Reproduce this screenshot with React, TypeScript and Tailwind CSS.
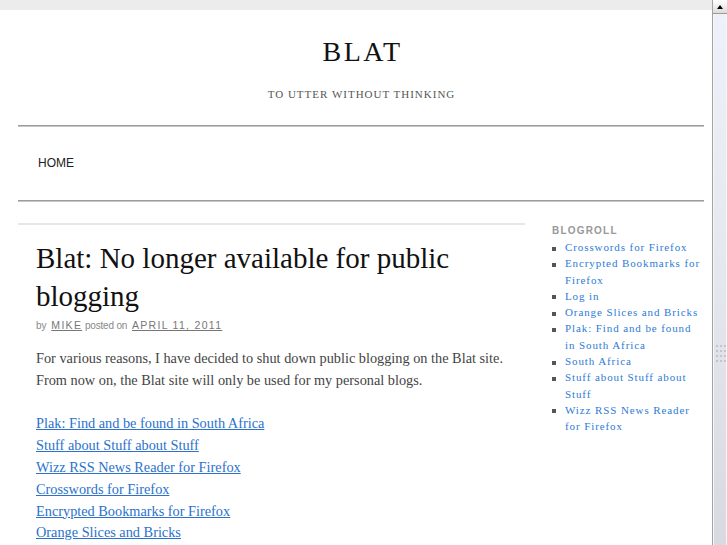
const serif = "font-['Liberation_Serif',serif]";
const sans = "font-['Liberation_Sans',Arial,sans-serif]";

const postLinks = [
  "Plak: Find and be found in South Africa",
  "Stuff about Stuff about Stuff",
  "Wizz RSS News Reader for Firefox",
  "Crosswords for Firefox",
  "Encrypted Bookmarks for Firefox",
  "Orange Slices and Bricks",
];

const blogroll = [
  "Crosswords for Firefox",
  "Encrypted Bookmarks for Firefox",
  "Log in",
  "Orange Slices and Bricks",
  "Plak: Find and be found in South Africa",
  "South Africa",
  "Stuff about Stuff about Stuff",
  "Wizz RSS News Reader for Firefox",
];

function Rule() {
  return <div className="border-t border-b border-t-[#9b9b9b] border-b-[#c6c6c6]" />;
}

function Scrollbar() {
  return (
    <div className="flex w-[15px] shrink-0 flex-col border-l border-[#a3a3a3] bg-[#d6d7dc]">
      <div className="flex h-[14px] items-center justify-center border-b border-[#9a9a9a] bg-gradient-to-b from-white to-[#dcdcdc]">
        <div className="h-0 w-0 border-x-[3.5px] border-b-[4px] border-x-transparent border-b-black" />
      </div>
      <div className="relative flex-1 border-x border-[#f7f7f7] bg-gradient-to-b from-[#eef1f9] via-[#e5e7ee] to-[#d9dadf]">
        {/* grip */}
        <div className="absolute left-[2px] top-[331px] grid grid-cols-3 gap-x-[2px] gap-y-[3px]">
          {Array.from({ length: 12 }).map((_, i) => (
            <span key={i} className="h-[2px] w-[2px] bg-[#c2c4ca]" />
          ))}
        </div>
      </div>
    </div>
  );
}

export default function App() {
  return (
    <div className="flex h-[545px] w-[727px] overflow-hidden bg-white">
      <div className="min-w-0 flex-1">
        <div className="h-[10px] bg-[#ececec]" />

        <div className="ml-[18px] w-[686px]">
          <header className={`text-center ${serif}`}>
            <h1 className="pl-[3px] pt-[26px] text-[28px] leading-[32px] tracking-[2.5px] text-[#111]">
              BLAT
            </h1>
            <p className="mt-[19.5px] pl-[1px] text-[11px] leading-[13px] tracking-[1px] text-[#555]">
              TO UTTER WITHOUT THINKING
            </p>
          </header>

          <div className="mt-[24.5px]">
            <Rule />
          </div>

          <nav className={`pb-[30px] pl-[20px] pt-[29px] text-[12px] leading-[14px] text-[#222] ${sans}`}>
            HOME
          </nav>

          <Rule />

          <div className="flex">
            {/* main column */}
            <main className="mt-[21px] w-[507px] border-t-2 border-[#e7e7e7] pl-[18px]">
              <h2 className={`mt-[14px] text-[29px] leading-[38px] text-[#111] ${serif}`}>
                Blat: No longer available for public blogging
              </h2>
              <p className={`mt-[4px] text-[10px] leading-[13px] text-[#888] ${sans}`}>
                by{" "}
                <a className="ml-[2px] text-[10.5px] tracking-[1.3px] text-[#777] underline">MIKE</a>{" "}
                <span className="tracking-[-0.2px]">posted on</span>{" "}
                <a className="ml-[2px] text-[10.5px] tracking-[1.3px] text-[#777] underline">APRIL 11, 2011</a>
              </p>
              <div className={`text-[14.3px] leading-[21.8px] ${serif}`}>
                <p className="mt-[16px] text-[#444]">
                  For various reasons, I have decided to shut down public blogging on the Blat site.
                  <br />
                  From now on, the Blat site will only be used for my personal blogs.
                </p>
                <p className="mt-[21.8px]">
                  {postLinks.map((l) => (
                    <a key={l} className="block w-fit text-[#2a72cc] underline">
                      {l}
                    </a>
                  ))}
                </p>
              </div>
            </main>

            {/* sidebar */}
            <aside className="ml-[27px] mt-[22px] w-[152px]">
              <h3 className={`text-[10px] font-bold leading-[13px] tracking-[1.2px] text-[#999] ${sans}`}>
                BLOGROLL
              </h3>
              <ul className={`mt-[2px] text-[11px] leading-[16.3px] tracking-[0.9px] ${serif}`}>
                {blogroll.map((b) => (
                  <li key={b} className="flex gap-[9px]">
                    <span className="mt-[7.5px] h-[4px] w-[4px] shrink-0 bg-[#555]" />
                    <a className="text-[#2e7bd6]">{b}</a>
                  </li>
                ))}
              </ul>
            </aside>
          </div>
        </div>
      </div>
      <Scrollbar />
    </div>
  );
}
